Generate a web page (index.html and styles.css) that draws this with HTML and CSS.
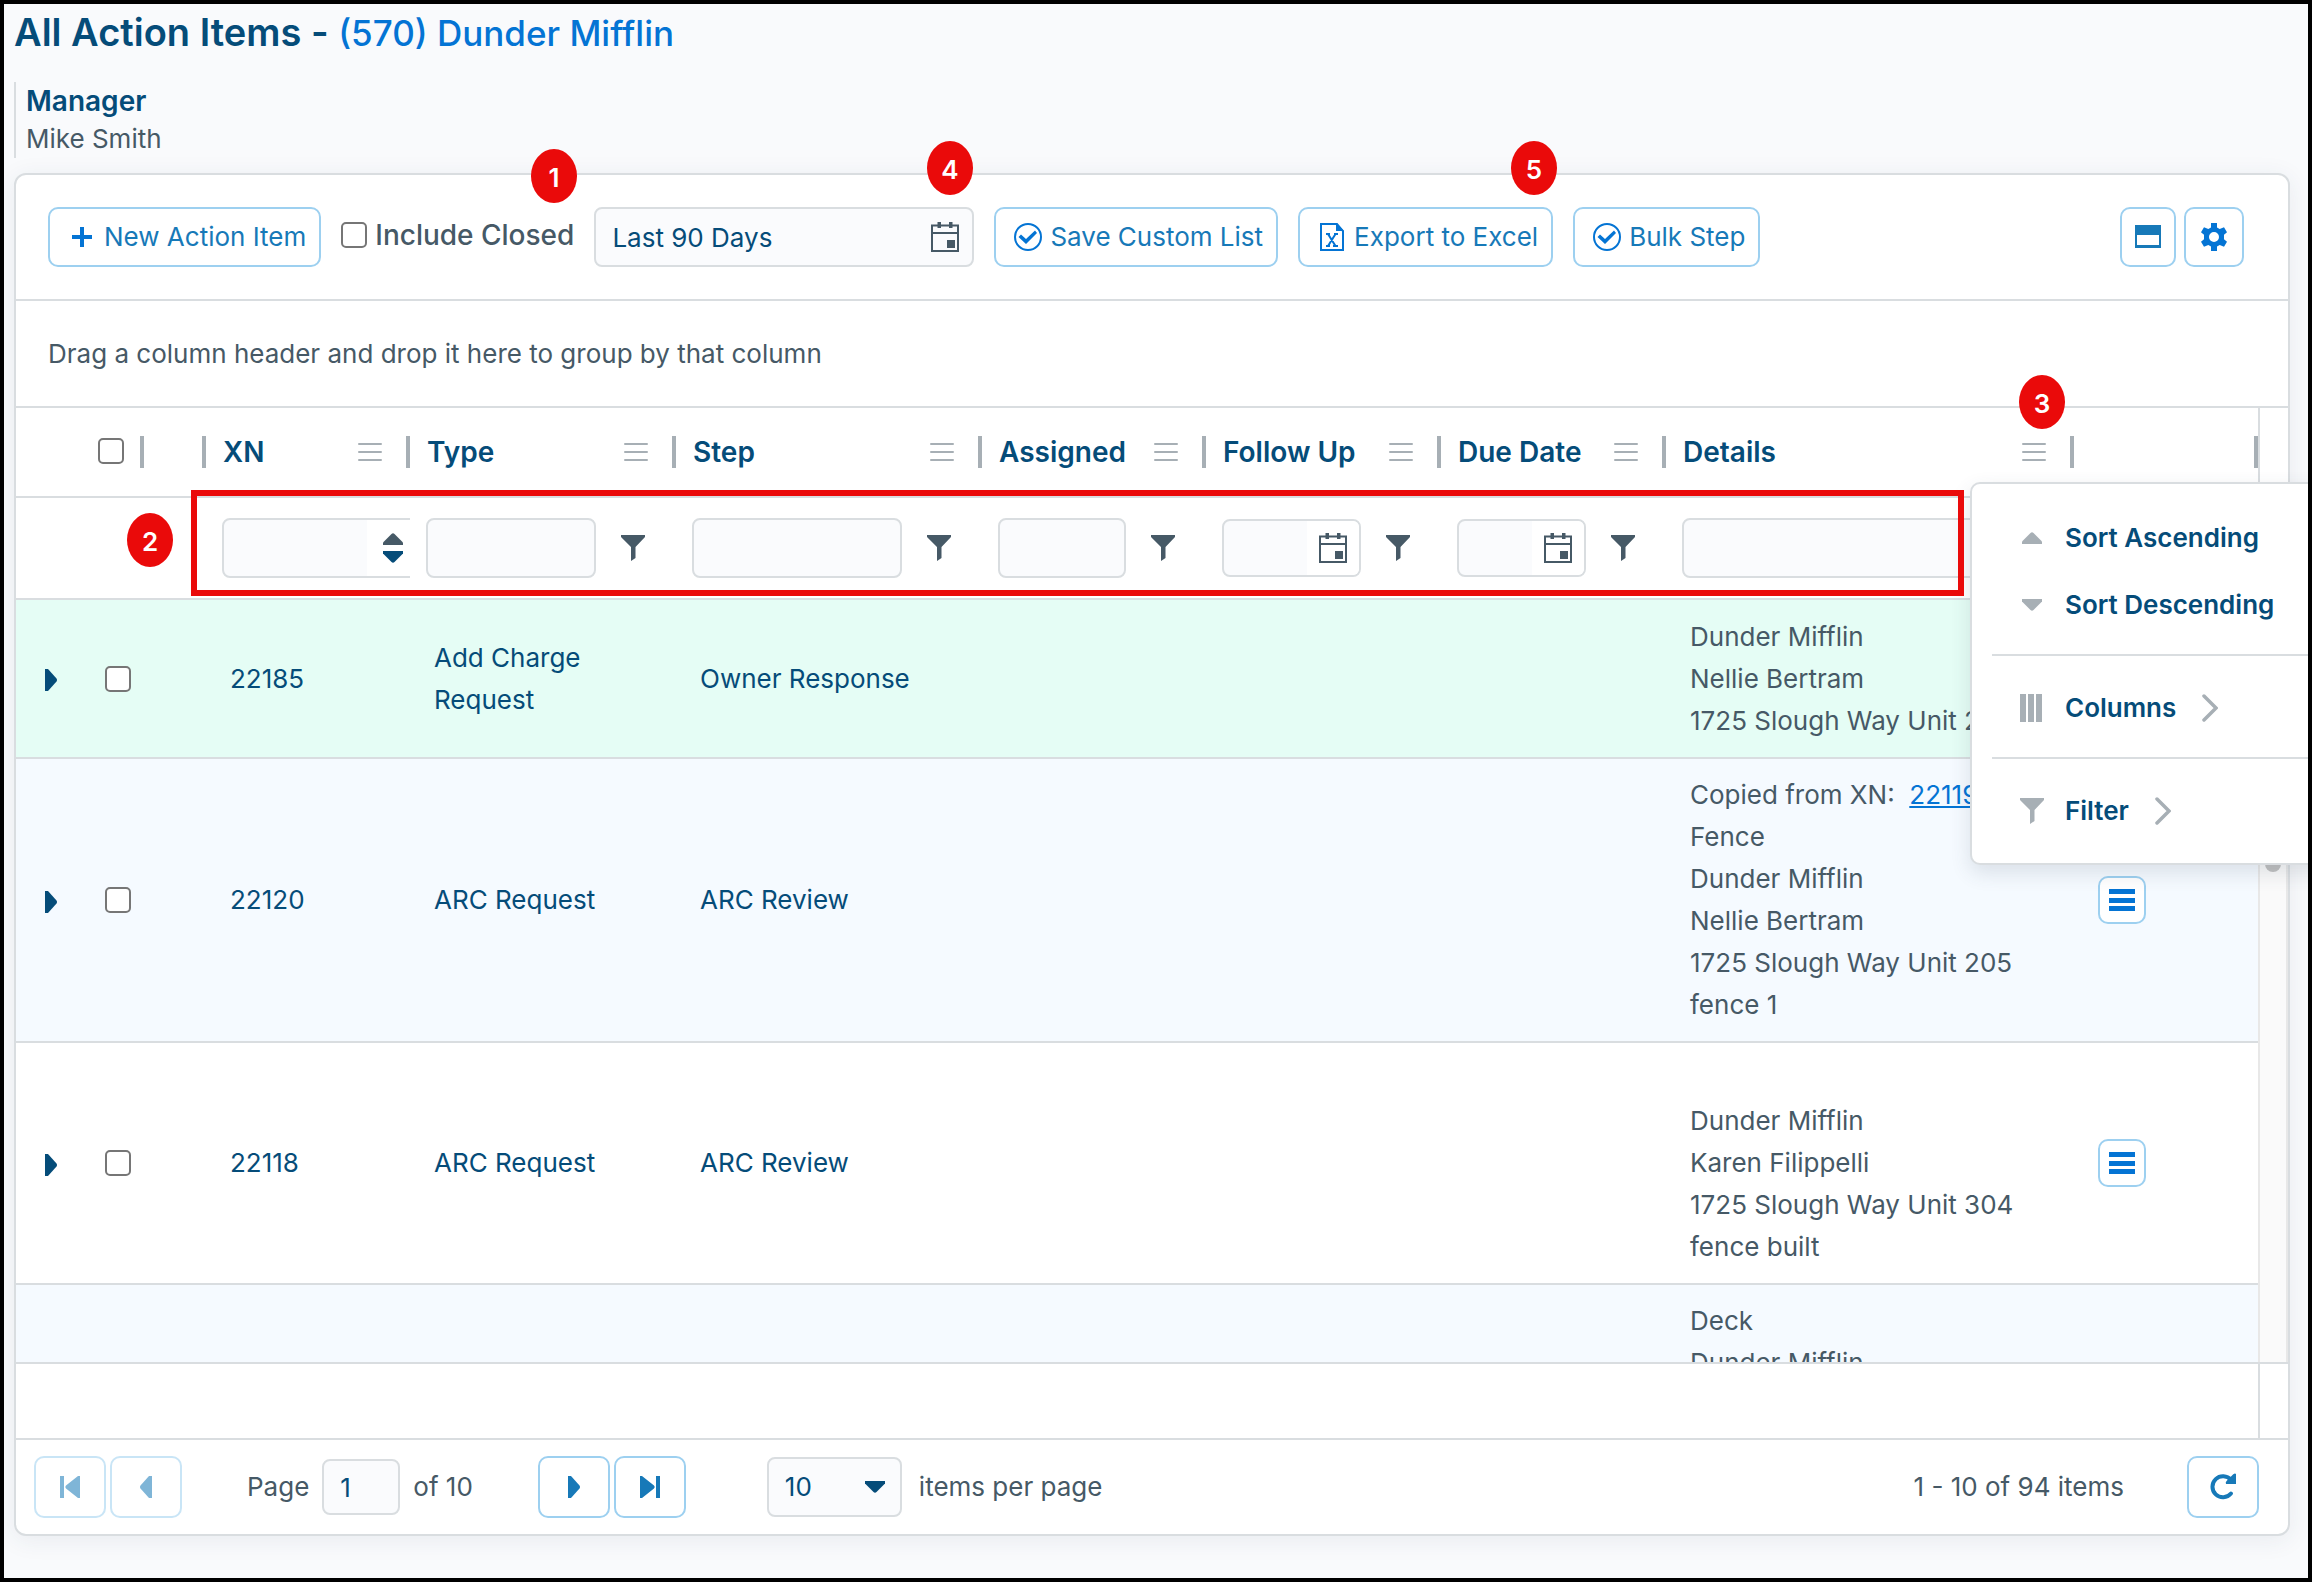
FILE: index.html
```html
<!DOCTYPE html>
<html lang="en">
<head>
<meta charset="utf-8">
<title>All Action Items</title>
<link rel="stylesheet" href="styles.css">
</head>
<body>
<svg class="sprite" aria-hidden="true">
  <symbol id="i-plus" viewBox="0 0 28 28"><path d="M14 4v20M4 14h20" stroke="currentColor" stroke-width="4" fill="none"/></symbol>
  <symbol id="i-check" viewBox="0 0 28 28"><circle cx="14" cy="14" r="13" fill="none" stroke="currentColor" stroke-width="2"/><path d="M4.500 14l2.500-2.500 5 4.500 9-8.500 2 2.500-11 11z" fill="currentColor"/></symbol>
  <symbol id="i-excel" viewBox="0 0 28 28"><path d="M3 1h16l6 7v19H3z" fill="none" stroke="currentColor" stroke-width="2"/><path d="M18 0v8h8z" fill="currentColor"/><path d="M8 11h4M8 23h4M16 11h4M15 23h5M10 11l7.500 12M17.500 11L10 23" fill="none" stroke="currentColor" stroke-width="2"/></symbol>
  <symbol id="i-cal" viewBox="0 0 28 30"><path d="M1 3.500h26V29H1zM1 11h26" fill="none" stroke="currentColor" stroke-width="2"/><path d="M6.500 0h3.500v6H6.500zM18 0h3.500v6H18zM16 18h8v8h-8z" fill="currentColor"/></symbol>
  <symbol id="i-window" viewBox="0 0 26 24"><path d="M1 1h24v21H1z" fill="none" stroke="currentColor" stroke-width="2"/><path d="M0 0h26v10H0zM0 20h26v3H0z" fill="currentColor"/></symbol>
  <symbol id="i-gear" viewBox="0 0 28 28"><path fill="currentColor" fill-rule="evenodd" d="M11 0h6v4.500l2.700 1.500 4.300-1.800 3 5.100-3 2.500v4.400l3 2.500-3 5.100-4.300-1.800-2.700 1.500V28h-6v-4.500L8.300 22 4 23.800l-3-5.100 3-2.500v-4.400L1 9.300l3-5.100L8.300 6 11 4.500zM14 9a5 5 0 1 0 0 10 5 5 0 0 0 0-10z"/></symbol>
  <symbol id="i-lines" viewBox="0 0 24 20"><path d="M1 2h22M1 10h22M1 18h22" stroke="currentColor" stroke-width="2" stroke-linecap="round"/></symbol>
  <symbol id="i-funnel" viewBox="0 0 24 26"><path d="M0 0h24v2l-9.500 10v11L10 26V12L0 2z" fill="currentColor"/></symbol>
  <symbol id="i-up" viewBox="0 0 20 12"><path d="M0 12v-2.500L8.500 1Q10-.5 11.500 1L20 9.500V12z" fill="currentColor"/></symbol>
  <symbol id="i-down" viewBox="0 0 20 12"><path d="M0 0v2.500L8.500 11q1.500 1.500 3 0L20 2.500V0z" fill="currentColor"/></symbol>
  <symbol id="i-right" viewBox="0 0 12 22"><path d="M0 0h3l8.500 9.500q1 1.500 0 3L3 22H0z" fill="currentColor"/></symbol>
  <symbol id="i-left" viewBox="0 0 12 22"><path d="M12 0H9L.5 9.500q-1 1.500 0 3L9 22h3z" fill="currentColor"/></symbol>
  <symbol id="i-first" viewBox="0 0 20 22"><path d="M0 0h4v22H0zM20 0h-2L6 9.500q-1.500 1.500 0 3L18 22h2z" fill="currentColor"/></symbol>
  <symbol id="i-last" viewBox="0 0 20 22"><path d="M20 0h-4v22h4zM0 0h2l12 9.500q1.500 1.500 0 3L2 22H0z" fill="currentColor"/></symbol>
  <symbol id="i-menu" viewBox="0 0 26 24"><path d="M0 1h26v5H0zM0 10h26v5H0zM0 18h26v5H0z" fill="currentColor"/></symbol>
  <symbol id="i-cols" viewBox="0 0 22 28"><path d="M0 0h6v28H0zM8 0h6v28H8zM16 0h6v28h-6z" fill="currentColor"/></symbol>
  <symbol id="i-chev" viewBox="0 0 16 28"><path d="M2 2l12 12L2 26" fill="none" stroke="currentColor" stroke-width="3.500" stroke-linecap="round"/></symbol>
  <symbol id="i-refresh" viewBox="0 0 28 28"><path d="M22 20.500A10.500 10.500 0 1 1 22 7" fill="none" stroke="currentColor" stroke-width="4" stroke-linecap="round"/><path d="M27 1v10H17q-1-2 1-3.500l6-6q2-1.500 3-.5z" fill="currentColor"/></symbol>
</svg>
<main class="frame">
  <h1 class="title">All Action Items - <a href="#">(570) Dunder Mifflin</a></h1>
  <div class="manager"><strong>Manager</strong><span>Mike Smith</span></div>

  <section class="card">
    <div class="toolbar">
      <button class="btn"><svg class="ic28"><use href="#i-plus"/></svg>New Action Item</button>
      <label class="closed"><input type="checkbox"> Include Closed</label>
      <div class="field range"><input type="text" value="Last 90 Days" aria-label="Date range"><svg class="cal"><use href="#i-cal"/></svg></div>
      <button class="btn"><svg class="ic28"><use href="#i-check"/></svg>Save Custom List</button>
      <button class="btn"><svg class="ic28"><use href="#i-excel"/></svg>Export to Excel</button>
      <button class="btn"><svg class="ic28"><use href="#i-check"/></svg>Bulk Step</button>
      <div class="tools">
        <button class="btn icon-btn" aria-label="Layout"><svg class="window"><use href="#i-window"/></svg></button>
        <button class="btn icon-btn gear" aria-label="Settings"><svg class="ic28"><use href="#i-gear"/></svg></button>
      </div>
    </div>
    <p class="group">Drag a column header and drop it here to group by that column</p>

    <div class="grid">
      <div class="view">
        <table>
          <colgroup><col class="c-exp"><col class="c-chk"><col class="c-gap"><col class="c-xn"><col class="c-type"><col class="c-step"><col class="c-asg"><col class="c-fol"><col class="c-due"><col><col class="c-act"></colgroup>
          <thead>
            <tr class="heads">
              <td></td>
              <th class="sep check"><input type="checkbox" aria-label="Select all"></th>
              <td class="sep"></td>
              <th class="sep"><div>XN<svg class="lines"><use href="#i-lines"/></svg></div></th>
              <th class="sep"><div>Type<svg class="lines"><use href="#i-lines"/></svg></div></th>
              <th class="sep"><div>Step<svg class="lines"><use href="#i-lines"/></svg></div></th>
              <th class="sep"><div>Assigned<svg class="lines"><use href="#i-lines"/></svg></div></th>
              <th class="sep"><div>Follow Up<svg class="lines"><use href="#i-lines"/></svg></div></th>
              <th class="sep"><div>Due Date<svg class="lines"><use href="#i-lines"/></svg></div></th>
              <th class="sep"><div>Details<svg class="lines"><use href="#i-lines"/></svg></div></th>
              <td class="sep"></td>
            </tr>
            <tr class="filters">
              <td></td><td></td><td></td>
              <td class="clip"><div class="field number"><input type="text" aria-label="Filter XN"><span class="addon spin"><svg><use href="#i-up"/></svg><svg><use href="#i-down"/></svg></span></div></td>
              <td><div class="filter"><div class="field"><input type="text" aria-label="Filter type"></div><svg class="funnel"><use href="#i-funnel"/></svg></div></td>
              <td><div class="filter"><div class="field"><input type="text" aria-label="Filter step"></div><svg class="funnel"><use href="#i-funnel"/></svg></div></td>
              <td><div class="filter"><div class="field"><input type="text" aria-label="Filter assigned"></div><svg class="funnel"><use href="#i-funnel"/></svg></div></td>
              <td><div class="filter"><div class="field date"><input type="text" aria-label="Filter follow up"><span class="addon"><svg class="cal"><use href="#i-cal"/></svg></span></div><svg class="funnel"><use href="#i-funnel"/></svg></div></td>
              <td><div class="filter"><div class="field date"><input type="text" aria-label="Filter due date"><span class="addon"><svg class="cal"><use href="#i-cal"/></svg></span></div><svg class="funnel"><use href="#i-funnel"/></svg></div></td>
              <td><div class="filter"><div class="field"><input type="text" aria-label="Filter details"></div><svg class="funnel"><use href="#i-funnel"/></svg></div></td>
              <td></td>
            </tr>
          </thead>
          <tbody>
            <tr class="new">
              <td class="exp"><svg><use href="#i-right"/></svg></td>
              <td><input type="checkbox" aria-label="Select 22185"></td><td></td>
              <td>22185</td><td>Add Charge Request</td><td>Owner Response</td><td></td><td></td><td></td>
              <td class="det">Dunder Mifflin<br>Nellie Bertram<br>1725 Slough Way Unit 205</td>
              <td><button class="btn row-btn" aria-label="Row menu"><svg><use href="#i-menu"/></svg></button></td>
            </tr>
            <tr class="alt">
              <td class="exp"><svg><use href="#i-right"/></svg></td>
              <td><input type="checkbox" aria-label="Select 22120"></td><td></td>
              <td>22120</td><td>ARC Request</td><td>ARC Review</td><td></td><td></td><td></td>
              <td class="det">Copied from XN: &nbsp;<a href="#">22119</a><br>Fence<br>Dunder Mifflin<br>Nellie Bertram<br>1725 Slough Way Unit 205<br>fence 1</td>
              <td><button class="btn row-btn" aria-label="Row menu"><svg><use href="#i-menu"/></svg></button></td>
            </tr>
            <tr>
              <td class="exp"><svg><use href="#i-right"/></svg></td>
              <td><input type="checkbox" aria-label="Select 22118"></td><td></td>
              <td>22118</td><td>ARC Request</td><td>ARC Review</td><td></td><td></td><td></td>
              <td class="det"><br>Dunder Mifflin<br>Karen Filippelli<br>1725 Slough Way Unit 304<br>fence built</td>
              <td><button class="btn row-btn" aria-label="Row menu"><svg><use href="#i-menu"/></svg></button></td>
            </tr>
            <tr class="alt">
              <td></td><td></td><td></td><td></td><td></td><td></td><td></td><td></td><td></td>
              <td class="det">Deck<br>Dunder Mifflin</td>
              <td></td>
            </tr>
          </tbody>
        </table>
      </div>
      <div class="bar"><div class="bar-head"></div><div class="track"><div class="thumb"></div></div></div>
    </div>
    <div class="foot"><div class="foot-main"></div><div class="foot-end"></div></div>

    <div class="pager">
      <button class="btn page-btn" disabled aria-label="First page"><svg class="ic-end"><use href="#i-first"/></svg></button>
      <button class="btn page-btn" disabled aria-label="Previous page"><svg class="ic-step"><use href="#i-left"/></svg></button>
      <div class="pages"><label for="page">Page</label><div class="field"><input id="page" type="text" value="1"></div><span>of 10</span></div>
      <button class="btn page-btn" aria-label="Next page"><svg class="ic-step"><use href="#i-right"/></svg></button>
      <button class="btn page-btn" aria-label="Last page"><svg class="ic-end"><use href="#i-last"/></svg></button>
      <div class="size"><div class="field"><select id="size"><option>10</option></select><svg class="caret"><use href="#i-down"/></svg></div><label for="size">items per page</label></div>
      <span class="info">1 - 10 of 94 items</span>
      <button class="btn page-btn" aria-label="Refresh"><svg class="ic28"><use href="#i-refresh"/></svg></button>
    </div>
  </section>

  <ul class="menu">
    <li><span class="mi"><svg class="tri"><use href="#i-up"/></svg></span>Sort Ascending</li>
    <li><span class="mi"><svg class="tri"><use href="#i-down"/></svg></span>Sort Descending</li>
    <li class="rule"></li>
    <li><span class="mi"><svg class="cols"><use href="#i-cols"/></svg></span>Columns<svg class="chev"><use href="#i-chev"/></svg></li>
    <li class="rule"></li>
    <li><span class="mi"><svg class="funnel"><use href="#i-funnel"/></svg></span>Filter<svg class="chev"><use href="#i-chev"/></svg></li>
  </ul>

  <div class="outline"></div>
  <span class="pin p1">1</span>
  <span class="pin p2">2</span>
  <span class="pin p3">3</span>
  <span class="pin p4">4</span>
  <span class="pin p5">5</span>
</main>
</body>
</html>
```
FILE: styles.css
```css
* { box-sizing: border-box; }
body {
  margin: 0;
  font: 400 26px/42px Inter, "Liberation Sans", sans-serif;
  color: #465966;
}
.sprite { display: none; }
svg { display: block; flex: none; }
button, input, select { font: inherit; color: inherit; }
a { color: #0474d4; }

.frame {
  position: relative;
  min-height: 100vh;
  border: 4px solid #000;
  padding: 4px 18px 40px 10px;
  background: #f9fafc;
  overflow: hidden;
}
.title { margin: 0; font-size: 38px; line-height: 48px; font-weight: 600; color: #054c79; }
.title a { font-size: 35px; font-weight: 500; text-decoration: none; }
.manager {
  display: flex;
  flex-direction: column;
  margin: 25px 0 15px;
  padding-left: 10px;
  border-left: 2px solid #d9dde0;
  line-height: 38px;
}
.manager strong { font-size: 28px; font-weight: 600; color: #054c79; }

.card {
  border: 2px solid #d9dde0;
  border-radius: 12px;
  background: #fff;
  box-shadow: 0 4px 24px rgba(40, 60, 90, .08);
  overflow: hidden;
}
.toolbar {
  display: flex;
  align-items: center;
  gap: 20px;
  padding: 32px 44px 32px 32px;
  border-bottom: 2px solid #d9dde0;
}
.btn {
  display: flex;
  align-items: center;
  gap: 8px;
  height: 60px;
  padding: 0 13px 0 18px;
  border: 2px solid #9dd0f0;
  border-radius: 10px;
  background: #fff;
  color: #1779b8;
  white-space: nowrap;
}
.btn svg { color: #0474d4; }
.ic28 { width: 28px; height: 28px; }
.icon-btn { width: 56px; padding: 0; justify-content: center; }
.gear { width: 60px; }
.btn .window { width: 26px; height: 24px; color: #1779b8; }
.tools { display: flex; gap: 8px; margin-left: auto; }

input[type="checkbox"] {
  appearance: none;
  display: block;
  width: 26px;
  height: 26px;
  margin: 0;
  border: 2px solid #767676;
  border-radius: 5px;
  background: #fff;
}
.closed { display: flex; align-items: center; gap: 8px; padding-bottom: 4px; font-size: 28px; font-weight: 500; white-space: nowrap; }

.field {
  display: flex;
  align-items: center;
  height: 60px;
  min-width: 0;
  border: 2px solid #d9dde0;
  border-radius: 8px;
  background: #fafbfd;
  overflow: hidden;
  color: #054c79;
}
.field input, .field select {
  flex: 1;
  min-width: 0;
  width: 100%;
  height: 100%;
  border: 0;
  padding: 0 16px;
  background: none;
  appearance: none;
}
.range { width: 380px; padding-right: 13px; }
.cal { width: 28px; height: 30px; color: #465966; }

.group { margin: 0; padding: 32px; line-height: 41px; border-bottom: 2px solid #d9dde0; }

.grid { display: flex; height: 956px; border-bottom: 2px solid #d9dde0; }
.view { flex: 1; min-width: 0; overflow: hidden; }
table { width: 100%; table-layout: fixed; border-collapse: separate; border-spacing: 0; color: #054c79; }
.c-exp { width: 65px; }
.c-chk { width: 63px; }
.c-gap { width: 62px; }
.c-xn { width: 204px; }
.c-type { width: 266px; }
.c-step { width: 306px; }
.c-asg { width: 224px; }
.c-fol { width: 235px; }
.c-due { width: 225px; }
.c-act { width: 184px; }
td, th { padding: 0; border-bottom: 2px solid #d9dde0; text-align: left; }
.heads > * { height: 90px; font-size: 28px; font-weight: 600; white-space: nowrap; }
.heads div { display: flex; align-items: center; justify-content: space-between; padding: 0 24px 0 17px; }
.heads .sep {
  background: linear-gradient(#a7afb5, #a7afb5) no-repeat right 28px / 4px 32px;
  background-position: right 0 top 28px;
}
.heads .check { padding: 0 0 2px 17px; }
.lines { width: 24px; height: 20px; margin-right: 4px; color: #a7afb5; }
.filters td { height: 102px; }
.filter { display: flex; align-items: center; padding: 0 31px 0 16px; gap: 25px; }
.filter .field { flex: 1; }
.filter .date { height: 58px; }
.funnel { width: 24px; height: 26px; color: #465966; }
.clip { overflow: hidden; }
.number { width: 204px; margin-left: 16px; }
.addon { display: flex; align-items: center; height: 100%; padding: 0 12px; background: #fff; }
.spin { flex-direction: column; justify-content: center; gap: 6px; padding: 0 21px 0 16px; }
.spin svg { width: 20px; height: 12px; }
.spin svg:first-child { color: #465966; }

tbody td { padding: 15px 24px; }
tbody .exp { padding: 18px 0 15px 29px; }
.exp svg { width: 12px; height: 22px; }
.det { color: #465966; white-space: nowrap; }
.new { background: #e5fdf5; }
.new .det { padding-top: 16px; }
.alt { background: #f5faff; }
.row-btn { width: 48px; height: 48px; padding: 0; justify-content: center; }
.row-btn svg { width: 26px; height: 24px; }

.bar { display: flex; flex-direction: column; width: 30px; }
.bar-head { height: 192px; border-left: 2px solid #d9dde0; border-bottom: 2px solid #d9dde0; }
.track { flex: 1; padding: 4px; border: 2px solid #e8e8e8; border-width: 0 2px; background: #fafafa; }
.thumb { width: 16px; height: 268px; margin: auto; border-radius: 8px; background: #c1c1c1; }
.foot { display: flex; height: 76px; border-bottom: 2px solid #d9dde0; }
.foot-main { flex: 1; }
.foot-end { width: 30px; border-left: 2px solid #d9dde0; }

.pager { display: flex; align-items: center; gap: 4px; padding: 16px 29px 16px 18px; }
.page-btn { width: 72px; height: 62px; padding: 0; justify-content: center; }
.page-btn svg { color: #1779b8; }
.page-btn:disabled { opacity: .55; }
.ic-end { width: 20px; height: 22px; }
.ic-step { width: 12px; height: 22px; }
.pages { display: flex; align-items: center; gap: 13px; margin: 0 61px; }
.pages .field { width: 78px; height: 56px; }
.size { display: flex; align-items: center; gap: 17px; margin-left: 77px; }
.size .field { width: 135px; padding-right: 15px; }
.caret { width: 20px; height: 12px; }
.info { margin: 0 59px 0 auto; }

.menu {
  position: absolute;
  top: 478px;
  right: -40px;
  width: 378px;
  margin: 0;
  padding: 20px 20px 19px;
  list-style: none;
  border: 2px solid #d9dde0;
  border-radius: 10px;
  background: #fff;
  box-shadow: 0 8px 20px rgba(60, 70, 90, .14);
  font-weight: 600;
  color: #054c79;
}
.menu li { display: flex; align-items: center; height: 67px; padding-left: 28px; }
.menu .rule { height: 2px; margin: 16px 0 18px; background: #d9dde0; }
.mi { width: 45px; }
.menu svg { color: #a7afb5; }
.tri { width: 20px; height: 12px; margin-left: 2px; }
.cols { width: 22px; height: 28px; }
.chev { width: 16px; height: 28px; margin-left: 26px; }

.outline { position: absolute; top: 486px; left: 187px; right: 344px; height: 106px; border: 6px solid #ea0a0a; }
.pin {
  position: absolute;
  width: 46px;
  height: 54px;
  padding-top: 2px;
  border-radius: 50%;
  background: #ea0a0a;
  color: #fff;
  font-size: 26px;
  font-weight: 600;
  line-height: 54px;
  text-align: center;
}
.p1 { top: 145px; left: 527px; }
.p2 { top: 509px; left: 123px; }
.p3 { top: 371px; right: 243px; }
.p4 { top: 137px; left: 923px; }
.p5 { top: 137px; left: 1507px; }
```
